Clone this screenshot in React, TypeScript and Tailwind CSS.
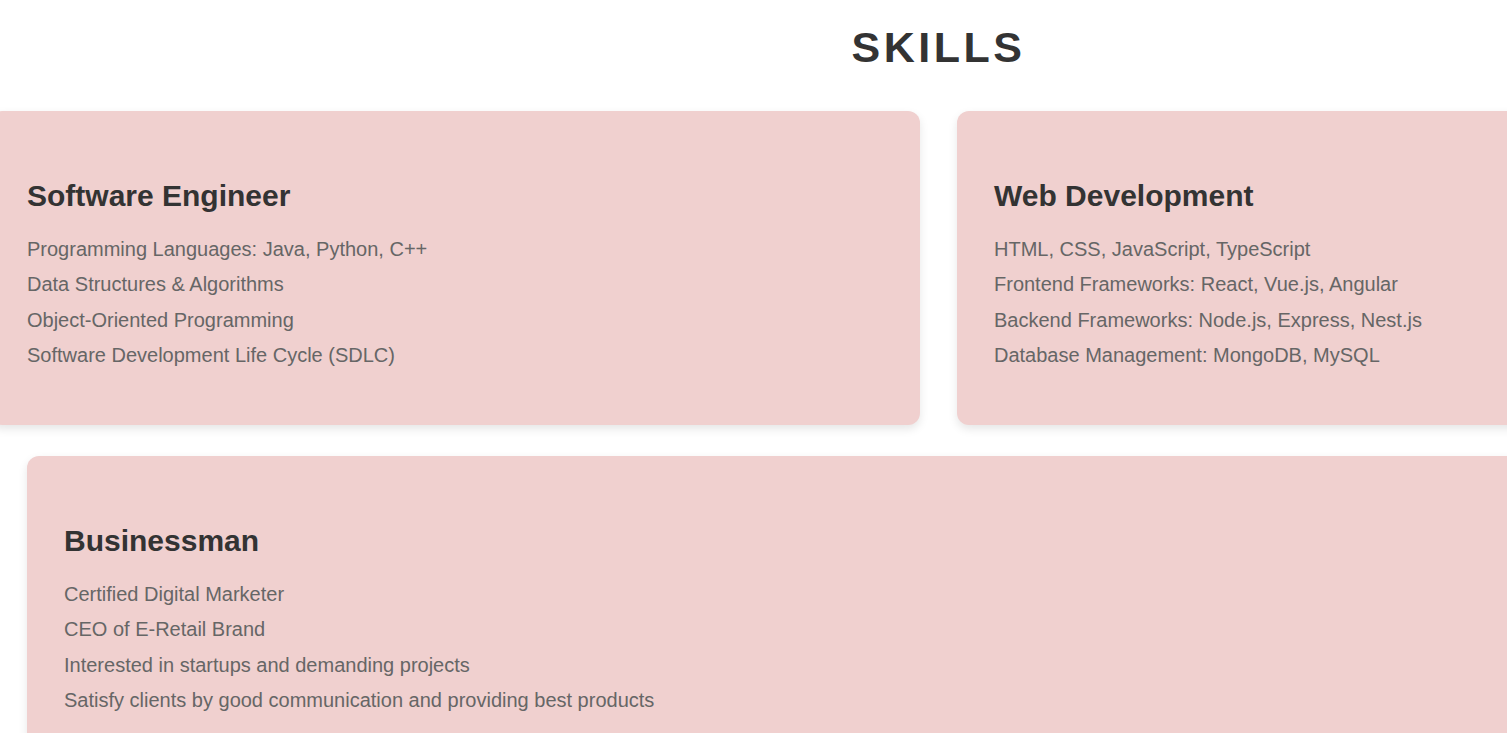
const cards = [
  {
    title: "Software Engineer",
    items: [
      "Programming Languages: Java, Python, C++",
      "Data Structures & Algorithms",
      "Object-Oriented Programming",
      "Software Development Life Cycle (SDLC)",
    ],
  },
  {
    title: "Web Development",
    items: [
      "HTML, CSS, JavaScript, TypeScript",
      "Frontend Frameworks: React, Vue.js, Angular",
      "Backend Frameworks: Node.js, Express, Nest.js",
      "Database Management: MongoDB, MySQL",
    ],
  },
  {
    title: "Businessman",
    items: [
      "Certified Digital Marketer",
      "CEO of E-Retail Brand",
      "Interested in startups and demanding projects",
      "Satisfy clients by good communication and providing best products",
    ],
  },
];

function SkillCard({ title, items, className }: { title: string; items: string[]; className?: string }) {
  return (
    <div
      className={
        "bg-[#f0d0cf] rounded-[12px] shadow-[0_4px_10px_rgba(0,0,0,0.1)] px-[37px] pt-[69px] pb-[52px] " +
        (className || "")
      }
    >
      <h3 className="text-[30px] leading-[32px] font-bold text-[#333]">{title}</h3>
      <ul className="mt-[20px]">
        {items.map((item) => (
          <li key={item} className="text-[20px] leading-[35.3px] text-[#666]">
            {item}
          </li>
        ))}
      </ul>
    </div>
  );
}

export default function App() {
  return (
    <div
      className="w-full h-[733px] overflow-hidden bg-white"
      style={{ fontFamily: '"Liberation Sans", Arial, sans-serif' }}
    >
      <div className="ml-[-10px] w-[1897px]">
        <h2 className="text-center text-[43px] leading-[56px] font-bold tracking-[3.5px] text-[#333] pt-[19px] pb-[36px]">
          SKILLS
        </h2>
        <div className="grid grid-cols-2 gap-[37px]">
          <SkillCard title={cards[0].title} items={cards[0].items} />
          <SkillCard title={cards[1].title} items={cards[1].items} />
        </div>
        <div className="mt-[31px] pl-[37px]">
          <SkillCard title={cards[2].title} items={cards[2].items} />
        </div>
      </div>
    </div>
  );
}
